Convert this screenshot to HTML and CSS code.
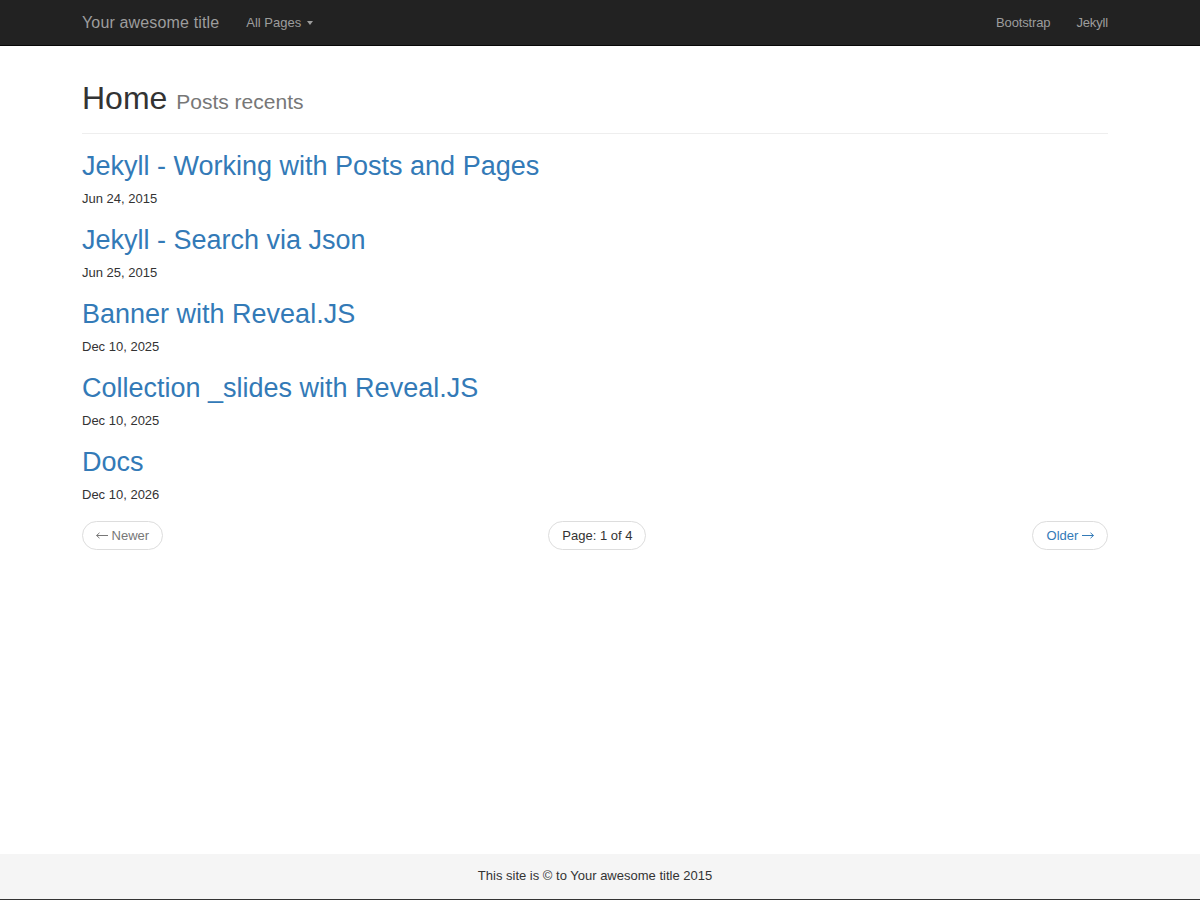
FILE: index.html
```html
<!DOCTYPE html>
<html lang="en">
<head>
<meta charset="utf-8">
<title>Your awesome title</title>
<link rel="stylesheet" href="styles.css">
</head>
<body>
<nav class="navbar">
  <div class="container navbar-inner">
    <a class="brand" href="#">Your awesome title</a>
    <ul class="nav">
      <li><a href="#">All Pages <span class="caret"></span></a></li>
    </ul>
    <ul class="nav nav-right">
      <li><a href="#">Bootstrap</a></li>
      <li><a href="#">Jekyll</a></li>
    </ul>
  </div>
</nav>

<main class="container main">
  <div class="page-header">
    <h1>Home <small>Posts recents</small></h1>
  </div>

  <div class="post">
    <h2><a href="#">Jekyll - Working with Posts and Pages</a></h2>
    <p class="date">Jun 24, 2015</p>
  </div>
  <div class="post">
    <h2><a href="#">Jekyll - Search via Json</a></h2>
    <p class="date">Jun 25, 2015</p>
  </div>
  <div class="post">
    <h2><a href="#">Banner with Reveal.JS</a></h2>
    <p class="date">Dec 10, 2025</p>
  </div>
  <div class="post">
    <h2><a href="#">Collection _slides with Reveal.JS</a></h2>
    <p class="date">Dec 10, 2025</p>
  </div>
  <div class="post">
    <h2><a href="#">Docs</a></h2>
    <p class="date">Dec 10, 2026</p>
  </div>

  <ul class="pager">
    <li><span class="pill disabled"><svg class="arrow" width="12" height="7" viewBox="0 0 12 7" aria-hidden="true"><path d="M0.5 3.5H12M3.5 0.8L0.6 3.5L3.5 6.2" fill="none" stroke="currentColor" stroke-width="1"/></svg> Newer</span></li>
    <li><span class="pill">Page: 1 of 4</span></li>
    <li><a class="pill" href="#">Older <svg class="arrow" width="12" height="7" viewBox="0 0 12 7" aria-hidden="true"><path d="M0 3.5H11.5M8.5 0.8L11.4 3.5L8.5 6.2" fill="none" stroke="currentColor" stroke-width="1"/></svg></a></li>
  </ul>
</main>

<footer class="footer">
  <div class="container footer-inner">This site is &copy; to Your awesome title 2015</div>
</footer>
</body>
</html>
```

FILE: styles.css
```css
* {
  box-sizing: border-box;
}

html, body {
  margin: 0;
  padding: 0;
}

body {
  font-family: "Liberation Sans", Arial, Helvetica, sans-serif;
  font-size: 13px;
  line-height: 1.42857;
  color: #333;
  background: #fff;
  min-height: 100vh;
  display: flex;
  flex-direction: column;
}

a {
  text-decoration: none;
}

.container {
  width: 1056px;
  padding: 0 15px;
  margin-left: calc(50% - 533px);
  margin-right: calc(50% - 523px);
}

/* Navbar */
.navbar {
  background: #222;
  border-bottom: 1px solid #080808;
  height: 46px;
}

.navbar-inner {
  height: 45px;
  display: flex;
  align-items: center;
}

.brand {
  font-size: 16px;
  letter-spacing: 0.15px;
  color: #9d9d9d;
  margin-right: 14px;
  line-height: 20px;
}

.nav {
  list-style: none;
  margin: 0;
  padding: 0;
  display: flex;
  align-items: center;
}

.nav a {
  display: block;
  padding: 0 13px;
  color: #9d9d9d;
  font-size: 13px;
  line-height: 20px;
}

.nav-right {
  margin-left: auto;
  margin-right: -13px;
}

.nav-right a {
  letter-spacing: -0.15px;
}

.caret {
  display: inline-block;
  width: 0;
  height: 0;
  margin-left: 2px;
  vertical-align: middle;
  border-top: 4px solid #9d9d9d;
  border-left: 3px solid transparent;
  border-right: 3px solid transparent;
}

/* Main */
.main {
  flex: 1;
}

.page-header {
  margin-top: 35px;
  padding-bottom: 17px;
  border-bottom: 1px solid #eee;
  margin-bottom: 17px;
}

.page-header h1 {
  margin: 0;
  font-size: 32px;
  font-weight: 500;
  line-height: 35px;
  color: #333;
}

.page-header small {
  font-size: 21px;
  font-weight: normal;
  color: #777;
  line-height: 1;
}

.post {
  margin-bottom: 17px;
}

.post h2 {
  margin: 0 0 9px;
  font-size: 27px;
  font-weight: 500;
  line-height: 30px;
}

.post h2 a {
  color: #337ab7;
}

.date {
  margin: 0;
  font-size: 13px;
  line-height: 18px;
  color: #333;
}

/* Pager */
.pager {
  list-style: none;
  margin: 3px 0 0;
  padding: 0;
  display: flex;
  justify-content: space-between;
  align-items: center;
}

.pill {
  display: inline-block;
  padding: 5px 13px;
  font-size: 13px;
  line-height: 17px;
  border: 1px solid #ddd;
  border-radius: 15px;
  background: #fff;
  color: #333;
}

a.pill {
  color: #337ab7;
  padding-left: 14px;
}

.pill.disabled {
  color: #777;
}

.arrow {
  display: inline-block;
  vertical-align: 1px;
}

/* Footer */
.footer {
  background: #f5f5f5;
  border-bottom: 1px solid #333;
}

.footer-inner {
  height: 45px;
  display: flex;
  align-items: center;
  justify-content: center;
  font-size: 13px;
  color: #333;
}
```
